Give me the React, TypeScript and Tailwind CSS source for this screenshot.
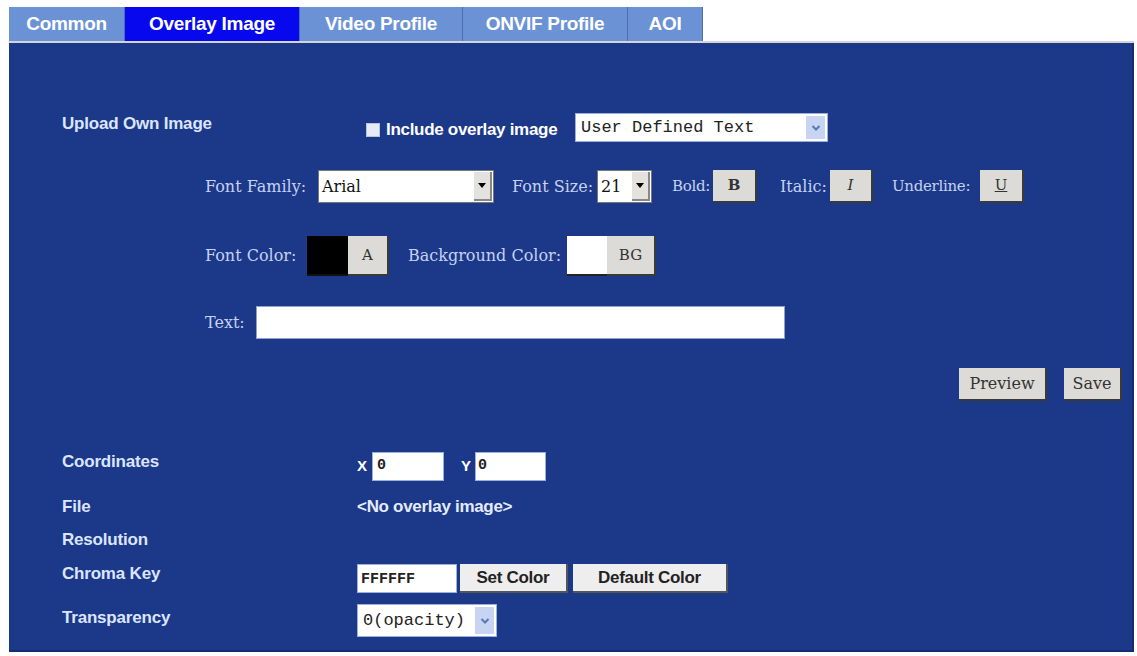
import React from "react";

const sans = "font-['Liberation_Sans_Narrow','Arial_Narrow','Liberation_Sans',Arial,sans-serif]";
const serif = "font-['DejaVu_Serif','Liberation_Serif',serif]";
const mono = "font-['Liberation_Mono','Courier_New',monospace]";

const tabs = [
  { label: "Common", w: "w-[116px]", active: false },
  { label: "Overlay Image", w: "w-[175px]", active: true },
  { label: "Video Profile", w: "w-[163px]", active: false },
  { label: "ONVIF Profile", w: "w-[165px]", active: false },
  { label: "AOI", w: "w-[75px]", active: false },
];

function Chevron() {
  return (
    <svg width="10" height="8" viewBox="0 0 10 8" fill="none" stroke="#5a78b8" strokeWidth="2">
      <polyline points="1.5 2 5 5.5 8.5 2" />
    </svg>
  );
}

function BlueSelect({ text, className }: { text: string; className: string }) {
  return (
    <div className={`flex items-stretch bg-white border border-[#9bb0dc] ${className}`}>
      <div className={`flex-1 flex items-center pl-[5px] text-[17px] text-[#222] ${mono}`}>{text}</div>
      <div className="w-[19px] bg-[#c8d5f2] flex items-center justify-center m-[2px]">
        <Chevron />
      </div>
    </div>
  );
}

function GraySelect({ text, className }: { text: string; className: string }) {
  return (
    <div className={`flex items-stretch bg-white border border-[#777] ${className}`}>
      <div className={`flex-1 flex items-center pl-[3px] text-[16px] text-[#111] ${serif}`}>{text}</div>
      <div className="w-[18px] bg-[#e4e2dc] border-r-2 border-b-2 border-[#888] flex items-center justify-center m-[1px]">
        <span className="block w-0 h-0 border-l-[4px] border-r-[4px] border-t-[5px] border-l-transparent border-r-transparent border-t-black" />
      </div>
    </div>
  );
}

function StyleBtn({ children, className = "" }: { children: React.ReactNode; className?: string }) {
  return (
    <div
      className={`h-[33px] shrink-0 bg-[#dddbd8] border-r-2 border-b-2 border-[#3a3a3a] flex items-center justify-center text-[#333] ${serif} ${className}`}
    >
      {children}
    </div>
  );
}

// serif label; width = distance from label start to the control it belongs to
function Label({ children, className = "", small = false }: { children: React.ReactNode; className?: string; small?: boolean }) {
  return (
    <span className={`shrink-0 text-[#c4d2f3] whitespace-nowrap ${small ? "text-[15px] tracking-[-0.3px]" : "text-[16px]"} ${serif} ${className}`}>
      {children}
    </span>
  );
}

function FieldName({ children, className = "" }: { children: React.ReactNode; className?: string }) {
  return (
    <div className={`w-[295px] shrink-0 text-[17px] font-bold tracking-[-0.2px] text-[#dbe5ff] ${sans} ${className}`}>
      {children}
    </div>
  );
}

export default function App() {
  return (
    <div className="w-[1137px] h-[656px] bg-white pt-[7px] pl-[9px] overflow-hidden">
      <div className="flex h-[34px]">
        {tabs.map((t) => (
          <div
            key={t.label}
            className={`${t.w} flex items-center justify-center border-r border-[#4a6fb8] text-[19px] font-bold text-white tracking-[-0.3px] ${sans} ${
              t.active ? "bg-[#0808ee]" : "bg-[#6c92d6]"
            }`}
          >
            {t.label}
          </div>
        ))}
      </div>
      <div className="w-[1125px] h-[2px] bg-[#d5d5d5]" />
      <div className="w-[1125px] h-[609px] bg-[#1c3889] border-r-2 border-b-2 border-[#152c70] pl-[53px] pt-[70px]">
        {/* Upload own image */}
        <div className="flex items-center h-[29px]">
          <FieldName className="mb-[8px]">Upload Own Image</FieldName>
          <div className="ml-[9px] w-[14px] h-[14px] shrink-0 bg-[#e6ebf5] border border-[#b8c3dc] mt-[4px]" />
          <span className={`ml-[6px] w-[189px] shrink-0 mt-[4px] text-[17px] font-bold tracking-[-0.3px] text-white ${sans}`}>
            Include overlay image
          </span>
          <BlueSelect text="User Defined Text" className="w-[253px] h-[29px]" />
        </div>

        {/* Font family row */}
        <div className="flex items-center h-[33px] mt-[28px] pl-[143px]">
          <Label className="w-[113px]">Font Family:</Label>
          <GraySelect text="Arial" className="w-[176px] h-[33px]" />
          <Label className="ml-[18px] w-[85px]">Font Size:</Label>
          <GraySelect text="21" className="w-[55px] h-[33px]" />
          <Label className="ml-[20px] w-[41px]" small>Bold:</Label>
          <StyleBtn className="w-[44px] font-bold text-[15px]">B</StyleBtn>
          <Label className="ml-[23px] w-[50px]">Italic:</Label>
          <StyleBtn className="w-[43px] italic text-[15px]">I</StyleBtn>
          <Label className="ml-[19px] w-[88px]" small>Underline:</Label>
          <StyleBtn className="w-[44px] underline text-[15px]">U</StyleBtn>
        </div>

        {/* Color row */}
        <div className="flex items-center h-[40px] mt-[33px] pl-[143px]">
          <Label className="w-[102px]">Font Color:</Label>
          <div className="w-[41px] h-[40px] shrink-0 bg-black border-b-2 border-[#111]" />
          <StyleBtn className="w-[41px] h-[40px] text-[15px]">A</StyleBtn>
          <Label className="ml-[19px] w-[159px]">Background Color:</Label>
          <div className="w-[40px] h-[40px] shrink-0 bg-white border-b-2 border-[#222]" />
          <StyleBtn className="w-[49px] h-[40px] text-[15px]">BG</StyleBtn>
        </div>

        {/* Text row */}
        <div className="flex items-center h-[33px] mt-[30px] pl-[143px]">
          <Label className="w-[51px]">Text:</Label>
          <div className="w-[529px] h-[33px] bg-white border border-[#8fa2cc]" />
        </div>

        {/* Preview / Save */}
        <div className="flex justify-end h-[32px] mt-[29px] pr-[10px] gap-[17px]">
          <StyleBtn className="w-[88px] h-[32px] text-[16px]">Preview</StyleBtn>
          <StyleBtn className="w-[58px] h-[32px] text-[16px]">Save</StyleBtn>
        </div>

        {/* Coordinates */}
        <div className="flex items-center h-[29px] mt-[52px]">
          <FieldName className="mb-[10px]">Coordinates</FieldName>
          <span className={`w-[15px] text-[15px] font-bold text-white ${sans}`}>X</span>
          <div className={`w-[72px] h-[29px] bg-white border border-[#9bb0dc] pl-[4px] flex items-center text-[15px] font-bold text-[#222] ${mono}`}>0</div>
          <span className={`ml-[17px] w-[14px] text-[15px] font-bold text-white ${sans}`}>Y</span>
          <div className={`w-[71px] h-[29px] bg-white border border-[#9bb0dc] pl-[2px] flex items-center text-[15px] font-bold text-[#222] ${mono}`}>0</div>
        </div>

        {/* File */}
        <div className="flex items-center h-[20px] mt-[16px]">
          <FieldName>File</FieldName>
          <span className={`text-[17px] font-bold tracking-[-0.3px] text-[#e4ebff] ${sans}`}>&lt;No overlay image&gt;</span>
        </div>

        {/* Resolution */}
        <div className="flex items-center h-[20px] mt-[13px]">
          <FieldName>Resolution</FieldName>
        </div>

        {/* Chroma key */}
        <div className="flex items-center h-[29px] mt-[14px]">
          <FieldName className="mb-[10px]">Chroma Key</FieldName>
          <div className={`w-[100px] h-[29px] bg-white border border-[#9bb0dc] pl-[3px] pt-[4px] flex items-center text-[15px] font-bold text-[#222] ${mono}`}>
            FFFFFF
          </div>
          <div className={`ml-[3px] w-[108px] h-[29px] bg-[#eeeeee] border-r-2 border-b-2 border-[#555] flex items-center justify-center text-[17px] font-bold tracking-[-0.3px] text-[#222] ${sans}`}>
            Set Color
          </div>
          <div className={`ml-[5px] w-[155px] h-[29px] bg-[#eeeeee] border-r-2 border-b-2 border-[#555] flex items-center justify-center text-[17px] font-bold tracking-[-0.3px] text-[#222] ${sans}`}>
            Default Color
          </div>
        </div>

        {/* Transparency */}
        <div className="flex items-center h-[33px] mt-[11px]">
          <FieldName className="mb-[6px]">Transparency</FieldName>
          <BlueSelect text="0(opacity)" className="w-[140px] h-[33px]" />
        </div>
      </div>
    </div>
  );
}
